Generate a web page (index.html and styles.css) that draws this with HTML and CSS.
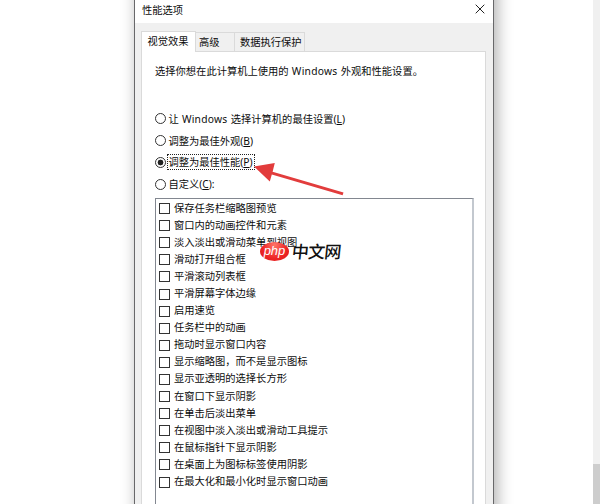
FILE: index.html
```html
<!DOCTYPE html>
<html lang="zh-CN">
<head>
<meta charset="utf-8">
<title>性能选项</title>
<link rel="stylesheet" href="styles.css">
</head>
<body>
<main class="desktop">
  <section class="dialog">
    <header class="titlebar">
      <h1 class="title">性能选项</h1>
      <svg class="close" viewBox="0 0 10 10"><path d="M.7.7 9.3 9.3M9.3.7.7 9.3"/></svg>
    </header>
    <div class="body">
      <nav class="tabs">
        <span class="tab active">视觉效果</span>
        <span class="tab advanced">高级</span>
        <span class="tab dep">数据执行保护</span>
      </nav>
      <div class="panel">
        <p class="intro">选择你想在此计算机上使用的 <span class="latin">Windows</span> 外观和性能设置。</p>
        <div class="radios">
          <label class="option"><i class="radio"></i><span class="label">让 <span class="latin">Windows</span> 选择计算机的最佳设置(<u>L</u>)</span></label>
          <label class="option"><i class="radio"></i><span class="label">调整为最佳外观(<u>B</u>)</span></label>
          <label class="option"><i class="radio checked"></i><span class="label focus">调整为最佳性能(<u>P</u>)</span></label>
          <label class="option"><i class="radio"></i><span class="label">自定义(<u>C</u>):</span></label>
        </div>
        <div class="list">
          <label class="item"><i class="box"></i><span class="text">保存任务栏缩略图预览</span></label>
          <label class="item"><i class="box"></i><span class="text">窗口内的动画控件和元素</span></label>
          <label class="item"><i class="box"></i><span class="text">淡入淡出或滑动菜单到视图</span></label>
          <label class="item"><i class="box"></i><span class="text">滑动打开组合框</span></label>
          <label class="item"><i class="box"></i><span class="text">平滑滚动列表框</span></label>
          <label class="item"><i class="box"></i><span class="text">平滑屏幕字体边缘</span></label>
          <label class="item"><i class="box"></i><span class="text">启用速览</span></label>
          <label class="item"><i class="box"></i><span class="text">任务栏中的动画</span></label>
          <label class="item"><i class="box"></i><span class="text">拖动时显示窗口内容</span></label>
          <label class="item"><i class="box"></i><span class="text">显示缩略图，而不是显示图标</span></label>
          <label class="item"><i class="box"></i><span class="text">显示亚透明的选择长方形</span></label>
          <label class="item"><i class="box"></i><span class="text">在窗口下显示阴影</span></label>
          <label class="item"><i class="box"></i><span class="text">在单击后淡出菜单</span></label>
          <label class="item"><i class="box"></i><span class="text">在视图中淡入淡出或滑动工具提示</span></label>
          <label class="item"><i class="box"></i><span class="text">在鼠标指针下显示阴影</span></label>
          <label class="item"><i class="box"></i><span class="text">在桌面上为图标标签使用阴影</span></label>
          <label class="item"><i class="box"></i><span class="text">在最大化和最小化时显示窗口动画</span></label>
        </div>
      </div>
    </div>
  </section>
  <aside class="scrollbar"><div class="thumb"></div></aside>
  <svg class="arrow" viewBox="0 0 92 34"><path d="M2 4.5 22.8 1 20.6 9.8 91.5 30.6 90.6 33.2 19.8 12.4 17.8 19.6Z"/></svg>
  <div class="watermark"><span class="badge">php</span><span class="site">中文网</span></div>
</main>
</body>
</html>
```
FILE: styles.css
```css
* { box-sizing: border-box; }
body {
  margin: 0;
  background: #fff;
  color: #0c0c0c;
  font: 10.27px/14px "Noto Sans", "Noto Sans CJK SC", sans-serif;
}
.desktop {
  position: relative;
  display: flex;
  justify-content: space-between;
  height: 504px;
  overflow: hidden;
}
.dialog {
  display: flex;
  flex-direction: column;
  width: 360px;
  height: 560px;
  margin-top: -20px;
  padding-top: 20px;
  margin-left: 134px;
  border: 1px solid #68686a;
  border-top: 0;
  background: #fff;
  box-shadow: 3px 0 15px rgba(0, 0, 0, .32);
}
.titlebar {
  display: flex;
  justify-content: space-between;
  height: 23px;
  padding: 3px 8px 0 7px;
}
.title { margin: 0; font-size: 10.27px; font-weight: 400; line-height: 14px; }
.close { width: 10px; height: 10px; margin-top: 1px; stroke: #222; stroke-width: 1; fill: none; }
.body {
  flex: 1;
  display: flex;
  flex-direction: column;
  padding: 8px 7px 0 6px;
  background: #f0f0f0;
}
.tabs { display: flex; align-items: flex-end; height: 20px; }
.tab {
  height: 19px;
  padding-top: 2px;
  border: 1px solid #dadada;
  border-left: 0;
  border-bottom: 0;
  background: #f0f0f0;
}
.tab.active {
  position: relative;
  width: 55px;
  height: 21px;
  margin-bottom: -1px;
  padding: 2px 0 0 5.5px;
  border-left: 1px solid #dadada;
  background: #fff;
}
.advanced { width: 39px; padding-left: 3px; }
.dep { width: 70px; padding-left: 5px; }
.panel {
  flex: 1;
  padding: 12px 11px 0 13px;
  border: 1px solid #dadada;
  background: #fff;
}
.intro { margin: 0; height: 44px; white-space: nowrap; letter-spacing: .01px; }
.latin { letter-spacing: .25px; margin: 0 .6px; }
.radios { display: flex; flex-direction: column; height: 90px; }
.option { display: flex; align-items: center; height: 21.8px; }
.radio {
  flex: none;
  width: 11px;
  height: 11px;
  margin-right: 2px;
  border: 1px solid #333;
  border-radius: 50%;
  background: #fff;
}
.checked { background: radial-gradient(circle, #222 0 2.6px, #fff 3.2px); }
.label { padding: 0 1px 0 .4px; line-height: 14px; white-space: nowrap; }
.focus { outline: 1px dotted #222; }
.label u { text-underline-offset: 1px; text-decoration-thickness: 1px; }
.list {
  height: 340px;
  padding-top: 1px;
  border: 1px solid #828790;
  border-right: 2px solid #c3c8cf;
}
.item { display: flex; align-items: center; gap: 4px; height: 17.1px; padding-left: 3px; white-space: nowrap; }
.text { padding-bottom: 2px; }
.box { flex: none; width: 11px; height: 11px; border: 1px solid #333; background: #fff; }
.scrollbar { width: 7px; padding-top: 464px; background: #f0f0f0; }
.thumb { height: 40px; background: #cdcdcd; }
.arrow { position: absolute; left: 252px; top: 162px; width: 92px; height: 34px; fill: #e23c3c; }
.watermark { position: absolute; left: 260px; top: 241px; display: flex; align-items: center; height: 20px; }
.badge {
  width: 29px;
  height: 19px;
  border-radius: 50%;
  background: radial-gradient(ellipse at 50% 15%, #ff7468, #ee2525 60%, #d91515);
  color: #fff;
  font: italic 13px/17px "Liberation Sans", sans-serif;
  text-align: center;
}
.site {
  margin-left: 3px;
  color: #111;
  font: 500 17px/18px "Noto Sans CJK SC", sans-serif;
  letter-spacing: -.8px;
  transform: skewX(-6deg);
}
```
